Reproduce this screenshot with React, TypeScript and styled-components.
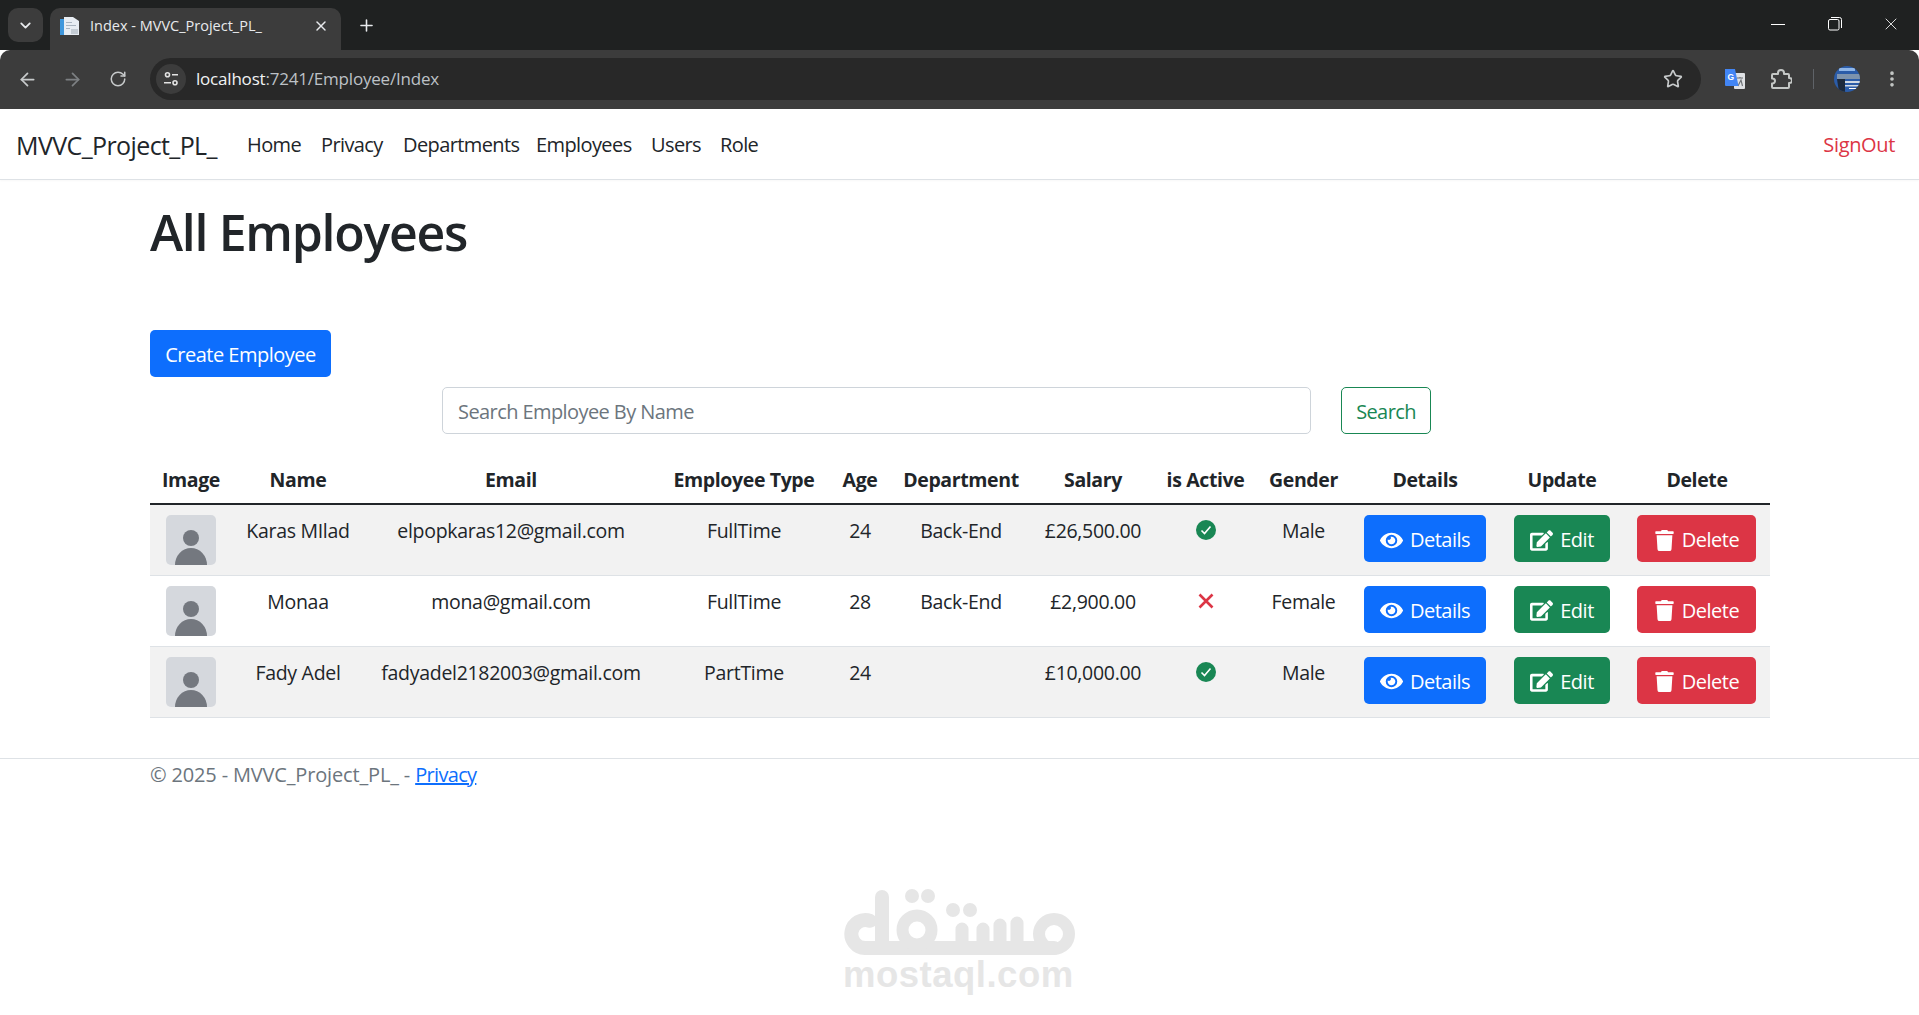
import React from "react";
import styled, { createGlobalStyle } from "styled-components";
import { FaEye, FaEdit, FaTrash } from "react-icons/fa";
import { ArrowLeft, ArrowRight, RotateCw, ChevronDown, X, Plus, Star, MoreVertical } from "lucide-react";

const Global = createGlobalStyle`
  html, body { margin: 0; padding: 0; background: #fff; }
  body { font-family: "Open Sans", "Noto Sans", sans-serif; font-size: 20px; line-height: 30px; color: #212529; letter-spacing: -0.35px; height: 1015px; overflow: hidden; position: relative; }
  * { box-sizing: border-box; }
`;

const TabStrip = styled.div`display: flex; align-items: flex-start; height: 50px; background: #1f2121; padding: 8px 0 0 8px;`;
const TabMenu = styled.div`width: 35px; height: 34px; border-radius: 10px; background: #3c3c3c; color: #e8eaed; display: flex; align-items: center; justify-content: center;`;
const Tab = styled.div`width: 291px; height: 42px; margin-left: 7px; background: #3c3c3c; border-radius: 10px 10px 0 0; display: flex; align-items: center; padding: 0 12px 7px 10px; color: #e8eaed; font-size: 14.5px; letter-spacing: 0;`;
const TabTitle = styled.span`flex: 1; margin-left: 10px; white-space: nowrap; overflow: hidden;`;
const NewTab = styled.div`width: 50px; height: 34px; color: #e8eaed; display: flex; align-items: center; justify-content: center;`;
const WindowControls = styled.div`margin-left: auto; margin-top: -8px; display: flex; height: 48px;`;
const WinBtn = styled.div`width: 56px; height: 48px; display: flex; align-items: center; justify-content: center; color: #fff;`;
const MinimizeBar = styled.div`width: 14px; height: 1px; background: #fff; margin-left: -2px;`;

const Toolbar = styled.div`height: 59px; background: #3c3c3c; border-radius: 10px 10px 0 0; display: flex; align-items: center; padding: 0 5px 1px;`;
const NavBtn = styled.div<{ $dim?: boolean }>`width: 45px; display: flex; justify-content: center; color: ${p => (p.$dim ? "#7d8083" : "#c7cacb")};`;
const Omnibox = styled.div`flex: 1; height: 42px; margin-left: 10px; background: #282828; border-radius: 21px; display: flex; align-items: center; padding: 0 18px 0 6px;`;
const SiteChip = styled.div`width: 30px; height: 30px; border-radius: 50%; background: #3c3c3c; display: flex; align-items: center; justify-content: center;`;
const Url = styled.div`flex: 1; margin-left: 10px; font-size: 17px; letter-spacing: -0.2px; color: #bdc1c6;`;
const UrlHost = styled.span`color: #f1f3f4;`;
const Slot = styled.div<{ $ml?: number; $w?: number }>`width: ${p => p.$w ?? 46}px; margin-left: ${p => p.$ml ?? 0}px; display: flex; justify-content: center; align-items: center; color: #c4c7c5;`;
const ToolSep = styled.div`width: 1px; height: 20px; margin-left: 9px; background: #5f6368;`;

const Navbar = styled.nav`height: 71px; border-bottom: 1px solid #dee2e6; display: flex; align-items: center; padding: 1px 24px 0 16px; box-shadow: 0 1px 2px rgba(0,0,0,.03);`;
const Brand = styled.a`font-size: 25px; width: 231px; flex: none; letter-spacing: -0.6px;`;
const NavLink = styled.a<{ $x: number }>`width: ${p => p.$x}px; flex: none; color: #212529; letter-spacing: -0.6px;`;
const SignOut = styled.a`margin-left: auto; color: #dc3545;`;

const Container = styled.main`width: 1620px; margin: 0 0 0 150px;`;
const Title = styled.h1`font-size: 50px; line-height: 60px; font-weight: 600; margin: 22px 0 68px; letter-spacing: -1.3px;`;
const Btn = styled.a<{ $bg: string; $w: number }>`display: inline-flex; align-items: center; justify-content: center; gap: 7px; width: ${p => p.$w}px; height: 47px; padding-top: 3px; background: ${p => p.$bg}; color: #fff; border-radius: 5px; white-space: nowrap; letter-spacing: -0.5px;`;
const SearchForm = styled.form`display: flex; gap: 30px; margin: 10px 0 31px; padding-left: 292px;`;
const SearchInput = styled.input`width: 869px; height: 47px; border: 1px solid #ced4da; border-radius: 5px; padding: 2px 15px 0; font: inherit; letter-spacing: -0.58px; color: #212529; &::placeholder { color: #6c757d; opacity: 1; }`;
const SearchBtn = styled.button`width: 90px; height: 47px; background: #fff; border: 1px solid #198754; border-radius: 5px; color: #198754; font: inherit; letter-spacing: -0.6px; padding: 2px 0 0;`;

const Table = styled.table`width: 1620px; table-layout: fixed; border-collapse: collapse;`;
const Th = styled.th`padding: 0; height: 39px; font-weight: 700; text-align: center; vertical-align: top; border-bottom: 2px solid #212529; white-space: nowrap; letter-spacing: -0.38px; font-size: 19.5px;`;
const Row = styled.tr<{ $odd: boolean }>`background: ${p => (p.$odd ? "#f2f2f2" : "#fff")}; border-bottom: 1px solid #dee2e6;`;
const Td = styled.td`padding: 11px 0 0; height: 71px; text-align: center; vertical-align: top; white-space: nowrap; font-size: 19.5px; letter-spacing: -0.3px;`;
const ControlTd = styled(Td)<{ $pr?: number }>`padding: 10px ${p => p.$pr ?? 0}px 0 0; font-size: 20px; letter-spacing: -0.5px;`;
const StatusIcon = styled.svg<{ $mt: number }>`display: block; margin: ${p => p.$mt}px auto 0;`;
const Avatar = styled.svg`display: block; margin-left: 16px; border-radius: 5px;`;

const Footer = styled.footer`margin-top: 40px; border-top: 1px solid #dee2e6; padding: 1px 0 0 150px; color: #6c757d; letter-spacing: -0.16px;`;
const FooterLink = styled.a`color: #0d6efd; text-decoration: underline; letter-spacing: -0.68px;`;

const Watermark = styled.div`position: absolute; left: 800px; top: 860px; width: 320px; height: 155px; pointer-events: none;`;
const WatermarkText = styled.div`position: absolute; left: 43px; top: 93px; font-family: "Liberation Sans", sans-serif; font-weight: 700; font-size: 36.5px; line-height: 44px; letter-spacing: 0.5px; color: #e6e6e6;`;

const cols = [82, 132, 294, 172, 60, 142, 122, 103, 93, 150, 124, 146];
const heads = ["Image", "Name", "Email", "Employee Type", "Age", "Department", "Salary", "is Active", "Gender", "Details", "Update", "Delete"];
const people = [
  { name: "Karas MIlad", email: "elpopkaras12@gmail.com", type: "FullTime", age: 24, dept: "Back-End", salary: "£26,500.00", active: true, gender: "Male" },
  { name: "Monaa", email: "mona@gmail.com", type: "FullTime", age: 28, dept: "Back-End", salary: "£2,900.00", active: false, gender: "Female" },
  { name: "Fady Adel", email: "fadyadel2182003@gmail.com", type: "PartTime", age: 24, dept: "", salary: "£10,000.00", active: true, gender: "Male" },
];
const links: [string, number][] = [["Home", 74], ["Privacy", 82], ["Departments", 133], ["Employees", 115], ["Users", 69], ["Role", 60]];

const PersonIcon = () => (
  <Avatar width="50" height="50" viewBox="0 0 50 50">
    <rect width="50" height="50" fill="#d5d8dd" />
    <circle cx="25" cy="23" r="8" fill="#74787f" />
    <path d="M9 50a16 17 0 0 1 32 0z" fill="#74787f" />
  </Avatar>
);

const CheckIcon = () => (
  <StatusIcon $mt={4} width="20" height="20" viewBox="0 0 20 20">
    <circle cx="10" cy="10" r="10" fill="#198754" />
    <path d="M5.5 10.5l3 3 6-7" fill="none" stroke="#fff" strokeWidth="1.6" />
  </StatusIcon>
);

const CrossIcon = () => (
  <StatusIcon $mt={6} width="16" height="16" viewBox="0 0 16 16">
    <path d="M1.5 1.5l13 13M14.5 1.5l-13 13" fill="none" stroke="#dc3545" strokeWidth="2.6" />
  </StatusIcon>
);

const Favicon = () => (
  <svg width="20" height="20" viewBox="0 0 20 20">
    <path d="M4 1h9l6 4v14H4z" fill="#e8edf3" />
    <path d="M0 3h4v16H0z" fill="#3f97dc" />
    <path d="M6 6h6v1H6zM6 9h10v1H6zM6 12h4v1H6z" fill="#a9b4c0" />
    <path d="M11 13h7v5h-7z" fill="#c4ccd4" />
  </svg>
);

const SiteIcon = () => (
  <svg width="16" height="16" viewBox="0 0 16 16" fill="none" stroke="#e3e3e3" strokeWidth="1.6">
    <circle cx="4.5" cy="3.8" r="2" />
    <path d="M9 3.8h6M1 11.8h7" />
    <circle cx="12" cy="11.8" r="2" />
  </svg>
);

const Translate = () => (
  <svg width="22" height="22" viewBox="0 0 22 22">
    <rect x="10" y="5" width="11" height="16" rx="1" fill="#dfe1e4" />
    <path d="M13 10h6M16 9v1M14 18l3-6 1.5 6" stroke="#6b6f73" strokeWidth="1.1" fill="none" />
    <path d="M1 1h10l3.5 17H2a1 1 0 0 1-1-1z" fill="#4285f4" />
    <text x="3.4" y="12" fontFamily="Liberation Sans, sans-serif" fontSize="8.5" fontWeight="700" fill="#fff">G</text>
  </svg>
);

const PuzzleIcon = () => (
  <svg width="22" height="22" viewBox="0 0 22 22" fill="none" stroke="#c4c7c5" strokeWidth="2" strokeLinejoin="round">
    <path d="M3 6h5v-1a3 3 0 0 1 6 0v1h4a1 1 0 0 1 1 1v3h.5a2.5 2.5 0 0 1 0 5H19v4a1 1 0 0 1-1 1H3a1 1 0 0 1-1-1v-3.5h.5a2.5 2.5 0 0 0 0-5H2V7a1 1 0 0 1 1-1z" />
  </svg>
);

const Profile = () => (
  <svg width="26" height="26" viewBox="0 0 26 26">
    <clipPath id="pf"><circle cx="13" cy="13" r="13" /></clipPath>
    <g clipPath="url(#pf)">
      <rect width="26" height="26" fill="#2b5ca8" />
      <path d="M3 8h23v5H3z" fill="#7d93ad" />
      <path d="M5 2h16v3H5z" fill="#8fb6e8" />
      <path d="M3 13h8v13H5z" fill="#1d2a3c" />
      <path d="M11 15h15v2H11zM11 19h15v1.5H11z" fill="#cfd8e3" />
      <path d="M15 22h10v1H15z" fill="#fff" />
    </g>
  </svg>
);

const RestoreIcon = () => (
  <svg width="14" height="14" viewBox="0 0 14 14" fill="none" stroke="#fff" strokeWidth="1">
    <rect x="0.5" y="2.5" width="10.5" height="10.5" rx="1.5" />
    <path d="M3 .5h8.5a2 2 0 0 1 2 2V11" />
  </svg>
);

const MostaqlMark = () => (
  <svg width="320" height="100" viewBox="0 0 320 100" fill="none" stroke="#e6e6e6" strokeLinecap="round">
    <g strokeWidth="14">
      <path d="M70 60.8A14 14 0 1 0 65 88H254" />
      <path d="M82 37v50" />
    </g>
    <g strokeWidth="13">
      <path d="M162 69v18M183 69v18M200 65v22M217 63v24" />
    </g>
    <g strokeWidth="12">
      <circle cx="117" cy="70" r="14.5" />
      <circle cx="254" cy="74" r="15" />
    </g>
    <g fill="#e6e6e6" stroke="none">
      <circle cx="112" cy="36" r="7" />
      <circle cx="128" cy="36" r="7" />
      <circle cx="153" cy="50" r="7" />
      <circle cx="170" cy="50" r="7" />
    </g>
  </svg>
);

export default function App() {
  return (
    <>
      <Global />
      <TabStrip>
        <TabMenu><ChevronDown size={17} strokeWidth={2.5} /></TabMenu>
        <Tab>
          <Favicon />
          <TabTitle>Index - MVVC_Project_PL_</TabTitle>
          <X size={16} strokeWidth={2.2} />
        </Tab>
        <NewTab><Plus size={19} strokeWidth={2} /></NewTab>
        <WindowControls>
          <WinBtn><MinimizeBar /></WinBtn>
          <WinBtn><RestoreIcon /></WinBtn>
          <WinBtn><X size={20} strokeWidth={1} /></WinBtn>
        </WindowControls>
      </TabStrip>
      <Toolbar>
        <NavBtn><ArrowLeft size={21} strokeWidth={2} /></NavBtn>
        <NavBtn $dim><ArrowRight size={21} strokeWidth={2} /></NavBtn>
        <NavBtn><RotateCw size={18} strokeWidth={2} /></NavBtn>
        <Omnibox>
          <SiteChip><SiteIcon /></SiteChip>
          <Url><UrlHost>localhost</UrlHost>:7241/Employee/Index</Url>
          <Star size={20} color="#c7cacb" strokeWidth={2} />
        </Omnibox>
        <Slot $ml={11}><Translate /></Slot>
        <Slot><PuzzleIcon /></Slot>
        <ToolSep />
        <Slot $ml={10}><Profile /></Slot>
        <Slot $w={44}><MoreVertical size={20} strokeWidth={2.4} /></Slot>
      </Toolbar>
      <Navbar>
        <Brand>MVVC_Project_PL_</Brand>
        {links.map(([label, w]) => <NavLink key={label} $x={w}>{label}</NavLink>)}
        <SignOut>SignOut</SignOut>
      </Navbar>
      <Container>
        <Title>All Employees</Title>
        <Btn $bg="#0d6efd" $w={181}>Create Employee</Btn>
        <SearchForm>
          <SearchInput placeholder="Search Employee By Name" />
          <SearchBtn type="button">Search</SearchBtn>
        </SearchForm>
        <Table>
          <colgroup>{cols.map((w, i) => <col key={i} width={w} />)}</colgroup>
          <thead><tr>{heads.map(h => <Th key={h}>{h}</Th>)}</tr></thead>
          <tbody>
            {people.map((p, i) => (
              <Row key={p.email} $odd={i % 2 === 0}>
                <ControlTd><PersonIcon /></ControlTd>
                <Td>{p.name}</Td>
                <Td>{p.email}</Td>
                <Td>{p.type}</Td>
                <Td>{p.age}</Td>
                <Td>{p.dept}</Td>
                <Td>{p.salary}</Td>
                <Td>{p.active ? <CheckIcon /> : <CrossIcon />}</Td>
                <Td>{p.gender}</Td>
                <ControlTd><Btn $bg="#0d6efd" $w={122}><FaEye size={23} />Details</Btn></ControlTd>
                <ControlTd><Btn $bg="#198754" $w={96}><FaEdit size={23} />Edit</Btn></ControlTd>
                <ControlTd $pr={1}><Btn $bg="#dc3545" $w={119}><FaTrash size={21} />Delete</Btn></ControlTd>
              </Row>
            ))}
          </tbody>
        </Table>
      </Container>
      <Footer>© 2025 - MVVC_Project_PL_ - <FooterLink>Privacy</FooterLink></Footer>
      <Watermark>
        <MostaqlMark />
        <WatermarkText>mostaql.com</WatermarkText>
      </Watermark>
    </>
  );
}
